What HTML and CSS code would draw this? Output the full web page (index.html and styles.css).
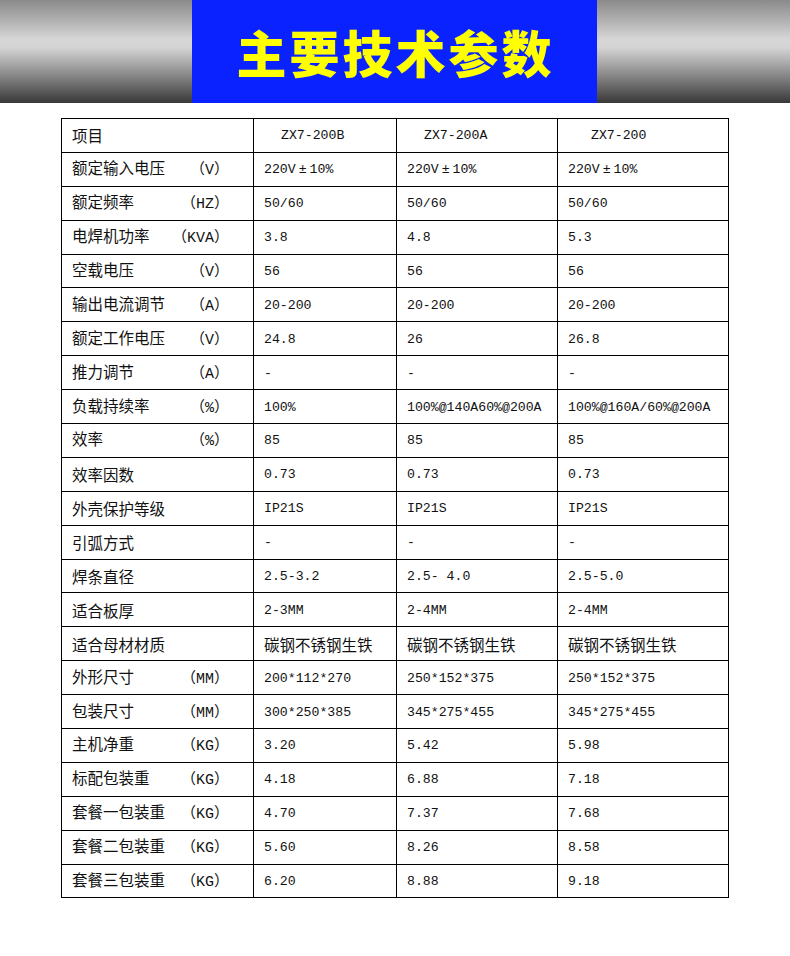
FILE: index.html
```html
<!DOCTYPE html>
<html lang="zh-CN">
<head>
<meta charset="utf-8">
<title>主要技术参数</title>
<link rel="stylesheet" href="styles.css">
</head>
<body>
<header class="band">
  <div class="title-box"><h1 class="title">主要技术参数</h1></div>
</header>
<main class="wrap">
<table class="spec">
  <colgroup><col class="c1"><col class="c2"><col class="c3"><col class="c4"></colgroup>
  <tr class="head"><td class="k"><div class="kk"><span>项目</span></div></td><td class="h">ZX7-200B</td><td class="h">ZX7-200A</td><td class="h h4">ZX7-200</td></tr>
  <tr><td class="k"><div class="kk"><span>额定输入电压</span><span class="u">（V）</span></div></td><td class="v">220V<span class="pm">±</span>10%</td><td class="v">220V<span class="pm">±</span>10%</td><td class="v">220V<span class="pm">±</span>10%</td></tr>
  <tr><td class="k"><div class="kk"><span>额定频率</span><span class="u">（HZ）</span></div></td><td class="v">50/60</td><td class="v">50/60</td><td class="v">50/60</td></tr>
  <tr><td class="k"><div class="kk"><span>电焊机功率</span><span class="u">（KVA）</span></div></td><td class="v">3.8</td><td class="v">4.8</td><td class="v">5.3</td></tr>
  <tr><td class="k"><div class="kk"><span>空载电压</span><span class="u">（V）</span></div></td><td class="v">56</td><td class="v">56</td><td class="v">56</td></tr>
  <tr><td class="k"><div class="kk"><span>输出电流调节</span><span class="u">（A）</span></div></td><td class="v">20-200</td><td class="v">20-200</td><td class="v">20-200</td></tr>
  <tr><td class="k"><div class="kk"><span>额定工作电压</span><span class="u">（V）</span></div></td><td class="v">24.8</td><td class="v">26</td><td class="v">26.8</td></tr>
  <tr><td class="k"><div class="kk"><span>推力调节</span><span class="u">（A）</span></div></td><td class="v">-</td><td class="v">-</td><td class="v">-</td></tr>
  <tr><td class="k"><div class="kk"><span>负载持续率</span><span class="u">（%）</span></div></td><td class="v">100%</td><td class="v">100%@140A60%@200A</td><td class="v">100%@160A/60%@200A</td></tr>
  <tr><td class="k"><div class="kk"><span>效率</span><span class="u">（%）</span></div></td><td class="v">85</td><td class="v">85</td><td class="v">85</td></tr>
  <tr><td class="k"><div class="kk"><span>效率因数</span></div></td><td class="v">0.73</td><td class="v">0.73</td><td class="v">0.73</td></tr>
  <tr><td class="k"><div class="kk"><span>外壳保护等级</span></div></td><td class="v">IP21S</td><td class="v">IP21S</td><td class="v">IP21S</td></tr>
  <tr><td class="k"><div class="kk"><span>引弧方式</span></div></td><td class="v">-</td><td class="v">-</td><td class="v">-</td></tr>
  <tr><td class="k"><div class="kk"><span>焊条直径</span></div></td><td class="v">2.5-3.2</td><td class="v">2.5- 4.0</td><td class="v">2.5-5.0</td></tr>
  <tr><td class="k"><div class="kk"><span>适合板厚</span></div></td><td class="v">2-3MM</td><td class="v">2-4MM</td><td class="v">2-4MM</td></tr>
  <tr><td class="k"><div class="kk"><span>适合母材材质</span></div></td><td class="c">碳钢不锈钢生铁</td><td class="c">碳钢不锈钢生铁</td><td class="c">碳钢不锈钢生铁</td></tr>
  <tr><td class="k"><div class="kk"><span>外形尺寸</span><span class="u">（MM）</span></div></td><td class="v">200*112*270</td><td class="v">250*152*375</td><td class="v">250*152*375</td></tr>
  <tr><td class="k"><div class="kk"><span>包装尺寸</span><span class="u">（MM）</span></div></td><td class="v">300*250*385</td><td class="v">345*275*455</td><td class="v">345*275*455</td></tr>
  <tr><td class="k"><div class="kk"><span>主机净重</span><span class="u">（KG）</span></div></td><td class="v">3.20</td><td class="v">5.42</td><td class="v">5.98</td></tr>
  <tr><td class="k"><div class="kk"><span>标配包装重</span><span class="u">（KG）</span></div></td><td class="v">4.18</td><td class="v">6.88</td><td class="v">7.18</td></tr>
  <tr><td class="k"><div class="kk"><span>套餐一包装重</span><span class="u">（KG）</span></div></td><td class="v">4.70</td><td class="v">7.37</td><td class="v">7.68</td></tr>
  <tr><td class="k"><div class="kk"><span>套餐二包装重</span><span class="u">（KG）</span></div></td><td class="v">5.60</td><td class="v">8.26</td><td class="v">8.58</td></tr>
  <tr><td class="k"><div class="kk"><span>套餐三包装重</span><span class="u">（KG）</span></div></td><td class="v">6.20</td><td class="v">8.88</td><td class="v">9.18</td></tr>
</table>
</main>
</body>
</html>
```
FILE: styles.css
```css
html, body {
  margin: 0;
  padding: 0;
  background: #ffffff;
}
body {
  width: 790px;
  font-family: "Noto Sans CJK SC", sans-serif;
  color: #111;
}
.band {
  height: 103px;
  display: flex;
  justify-content: center;
  background: linear-gradient(to bottom, #8a8a8a 0%, #b5b5b5 22%, #d6d6d6 38%, #d4d4d4 46%, #a8a8a8 62%, #6e6e6e 82%, #383838 100%);
}
.title-box {
  width: 405px;
  margin-left: -1px;
  background: #0a22ff;
  display: flex;
  align-items: center;
  justify-content: center;
}
.title {
  margin: 0;
  font-family: "Noto Sans CJK SC", sans-serif;
  font-weight: 900;
  font-size: 50px;
  letter-spacing: 3px;
  color: #ffff00;
  line-height: 1;
  padding-left: 2px;
  position: relative;
  top: -1px;
}
.wrap {
  padding: 15px 0 0 61px;
}
.spec {
  border-collapse: collapse;
  table-layout: fixed;
  width: 667px;
}
.c1 { width: 192px; }
.c2 { width: 143px; }
.c3 { width: 161px; }
.c4 { width: 171px; }
.spec tr { height: 33.9px; }
.spec td {
  border: 1px solid #000;
  padding: 0 0 0 10px;
  white-space: nowrap;
  vertical-align: middle;
  line-height: 20px;
}
.k {
  font-size: 15.5px;
}
.kk {
  display: flex;
  justify-content: space-between;
  align-items: baseline;
  padding-right: 24px;
}
.u {
  font-family: "Liberation Mono", "Noto Sans CJK SC", monospace;
  font-size: 15px;
}
.v {
  font-family: "Liberation Mono", "Noto Sans CJK SC", monospace;
  font-size: 13.2px;
  color: #111;
  padding-top: 2px !important;
}
.h {
  font-family: "Liberation Mono", monospace;
  font-size: 13.2px;
  padding-left: 27px !important;
  padding-top: 2px !important;
}
.h4 { padding-left: 33px !important; }
.pm {
  display: inline-block;
  margin: 0 3px;
}
.c {
  font-size: 15.5px;
}
```
